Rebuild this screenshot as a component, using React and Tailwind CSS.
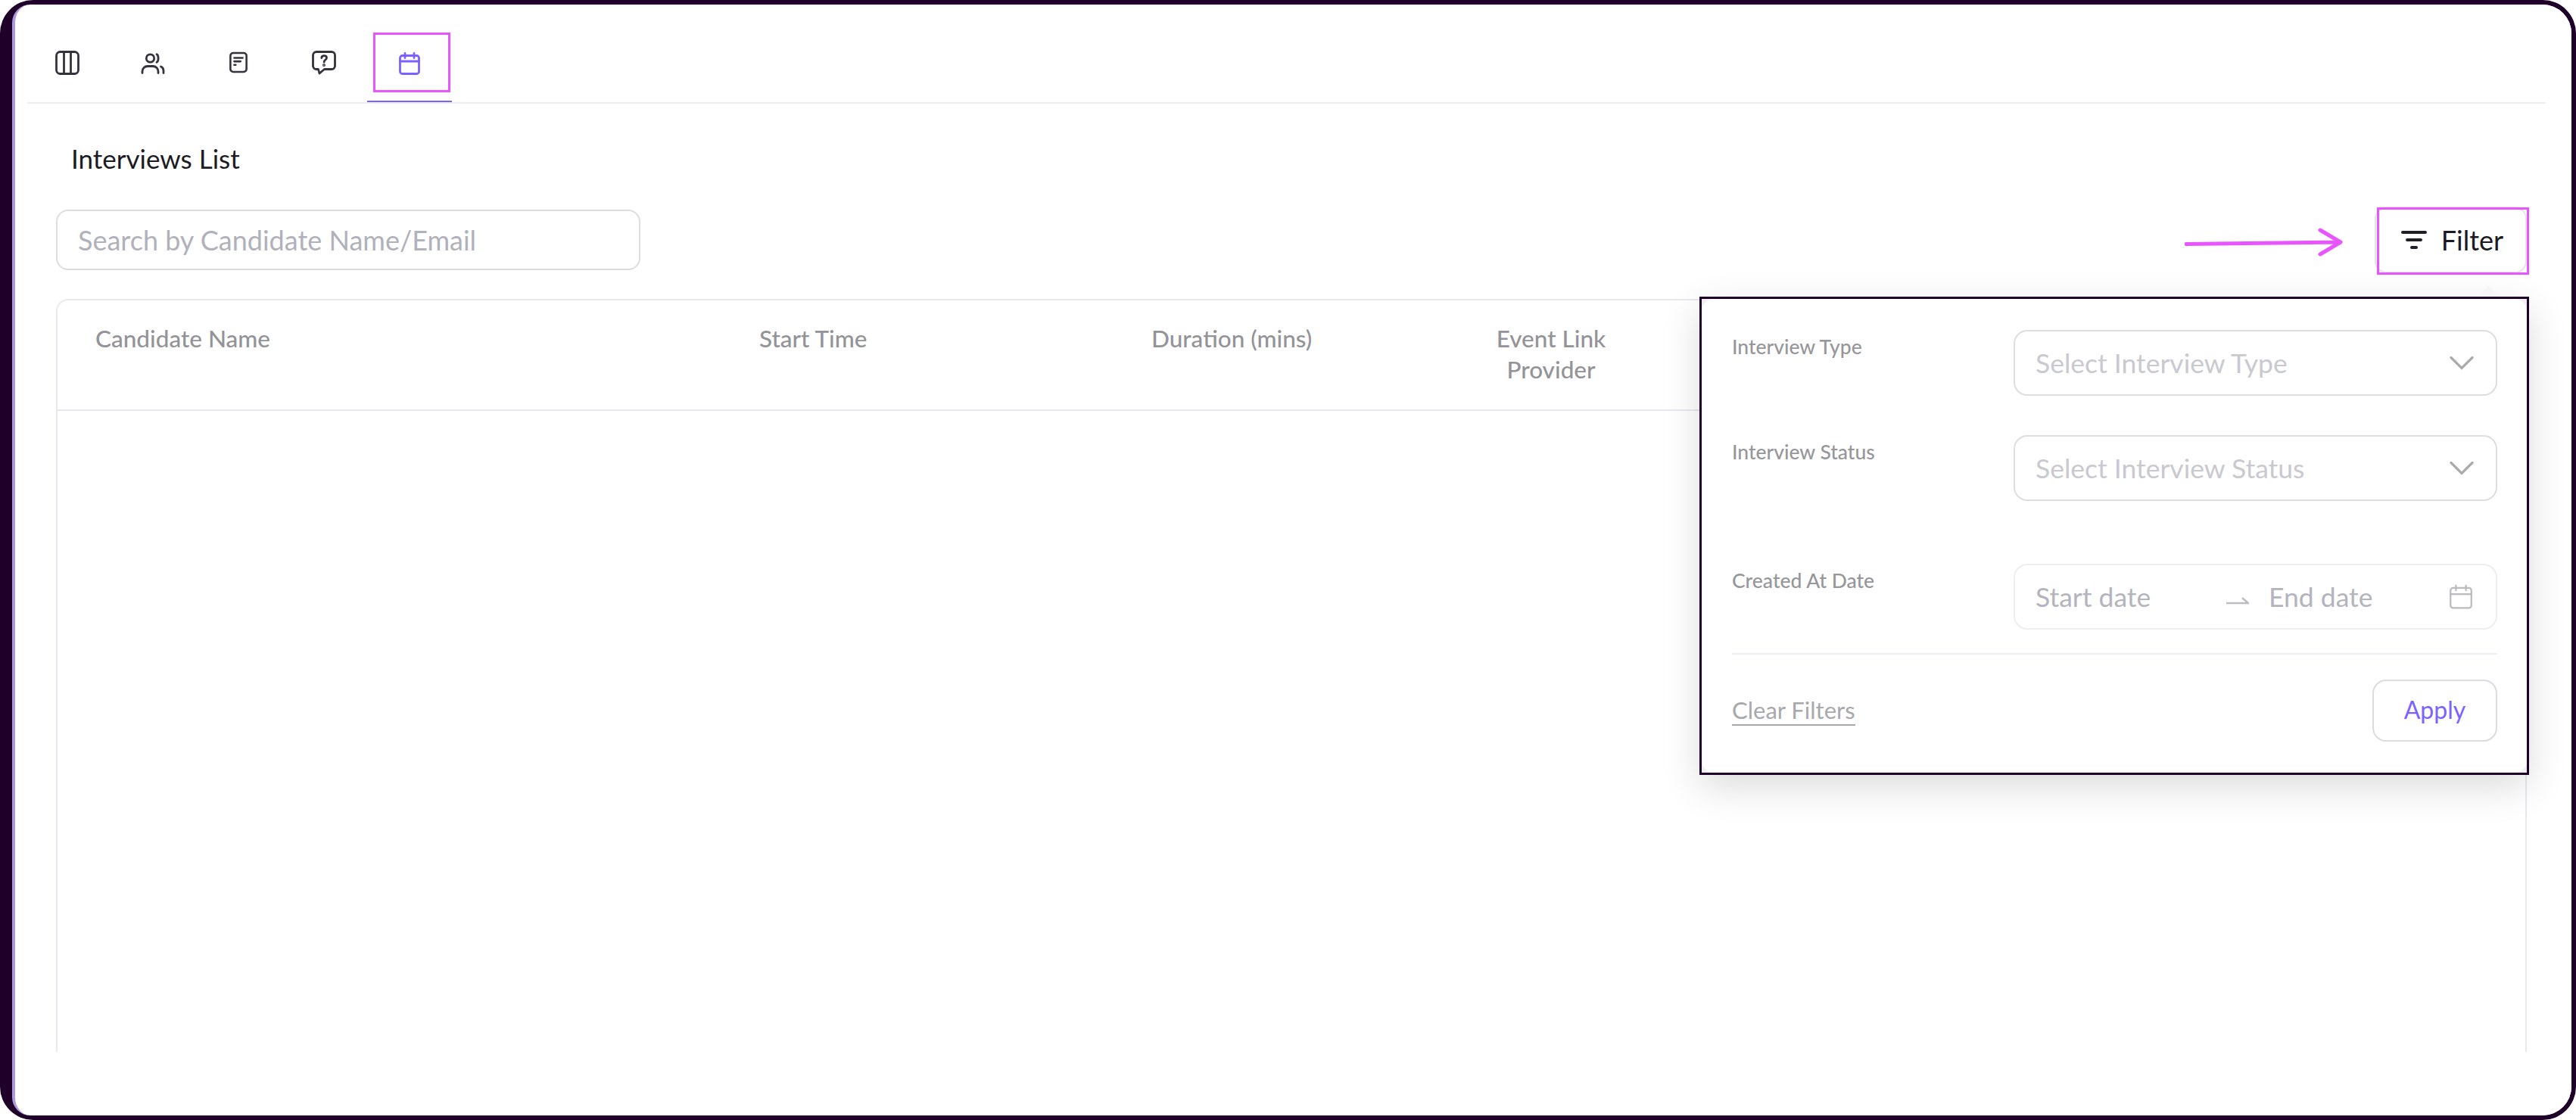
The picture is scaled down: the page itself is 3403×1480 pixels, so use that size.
import React from "react";

const font = { fontFamily: '"Lato", "Liberation Sans", sans-serif' };

function Tab({ active, children }) {
  return (
    <div className={`relative flex h-[129px] w-[113px] items-start justify-center pt-[61px] ${active ? "text-[#7b61ff]" : "text-[#33333d]"}`}>
      {children}
      {active && <div className="absolute bottom-0 left-[1px] right-0 h-[2px] bg-[#7b61ff]" />}
      {active && <div className="absolute left-[9px] right-[2px] top-[37px] h-[79px] border-[3px] border-[#e855ff]" />}
    </div>
  );
}

function ColumnsIcon() {
  return (
    <svg width="32" height="32" viewBox="0 0 32 32" fill="none" stroke="currentColor" strokeWidth="2.8">
      <rect x="1.5" y="1.5" width="29" height="29" rx="5" />
      <path d="M11.5 1.5v29M20.5 1.5v29" />
    </svg>
  );
}
function UsersIcon() {
  return (
    <svg className="mt-[2px]" width="32" height="30" viewBox="0 0 32 30" fill="none" stroke="currentColor" strokeWidth="2.8" strokeLinecap="round">
      <circle cx="12.5" cy="8" r="5.2" />
      <path d="M21 2.800c2.800 1.200 2.800 9 0 10.400" />
      <path d="M2 27.500v-2c0-4 3-7 7-7h7c4 0 7 3 7 7v2" />
      <path d="M26.500 19c2.200.8 3.500 3.400 3.500 5.500v3" />
    </svg>
  );
}
function DocIcon() {
  return (
    <svg className="mt-[1px]" width="24" height="29" viewBox="0 0 26 30" fill="none" stroke="currentColor" strokeWidth="2.8" strokeLinecap="round">
      <rect x="1.5" y="1.5" width="23" height="27" rx="4" />
      <path d="M7 8.500h12M7 13.500h9M7 18.500h2" />
    </svg>
  );
}
function HelpIcon() {
  return (
    <svg width="32" height="32" viewBox="0 0 32 32" fill="none" stroke="currentColor" strokeWidth="2.8" strokeLinejoin="round" strokeLinecap="round">
      <path d="M6 1.500h20a4.500 4.500 0 0 1 4.500 4.500v14a4.500 4.500 0 0 1-4.500 4.500h-9.500L10 30l-1.500-5.500H6A4.500 4.500 0 0 1 1.500 20V6A4.500 4.500 0 0 1 6 1.500z" />
      <path d="M12.800 9.500c.3-3.800 6.500-3.800 6.700-.2.100 2.700-3.400 2.800-3.400 5.700" />
      <circle cx="16" cy="19" r="0.6" fill="currentColor" />
    </svg>
  );
}
function CalendarIcon({ w = 28, h = 30, sw = 2.8 }) {
  return (
    <svg width={w} height={h} viewBox="0 0 28 30" fill="none" stroke="currentColor" strokeWidth={sw} strokeLinecap="round">
      <rect x="1.500" y="4.500" width="25" height="24" rx="3" />
      <path d="M1.500 12h25M8 1.500v6M20 1.500v6" />
    </svg>
  );
}

function Label({ children }) {
  return <div className="w-[372px] shrink-0 pt-[4px] text-[26.5px] font-medium leading-[36px] text-[#96969b]">{children}</div>;
}

function Select({ placeholder }) {
  return (
    <div className="flex h-[87px] w-[639px] shrink-0 items-center justify-between rounded-[18px] border-2 border-[#dedee2] pl-[27px] pr-[29px]">
      <span className="text-[35.5px] leading-none text-[#c9c9cf]">{placeholder}</span>
      <svg width="32" height="20" viewBox="0 0 32 20" fill="none" stroke="#ababab" strokeWidth="3.200" strokeLinecap="round">
        <path d="M2 2.500l14 14 14-14" />
      </svg>
    </div>
  );
}

export default function App() {
  return (
    <div className="h-[1480px] w-[3403px] overflow-hidden bg-white" style={font}>
      <div className="h-full w-full rounded-[44px] border-y-[6px] border-l-[16px] border-r-[6px] border-[#1e0028]">
        <div className="relative h-full overflow-hidden rounded-l-[24px] rounded-r-[38px] border-l-4 border-[#ac9bdc] bg-white">
          <div className="ml-4 mr-[34px] flex h-[131px] border-b-2 border-[#eeeeee]">
            <div className="-ml-1 flex">
              <Tab><ColumnsIcon /></Tab>
              <Tab><UsersIcon /></Tab>
              <Tab><DocIcon /></Tab>
              <Tab><HelpIcon /></Tab>
              <Tab active><span className="mt-[2px] block"><CalendarIcon /></span></Tab>
            </div>
          </div>

          <h1 className="ml-[74px] mt-[52px] text-[35px] font-normal leading-[40px] text-[#1b1b23]">Interviews List</h1>

          <div className="ml-[54px] mr-[59px] mt-[44px] flex items-center justify-between">
            <div className="flex h-[80px] w-[772px] items-center rounded-[16px] border-2 border-[#dddde0] pl-[27px]">
              <span className="text-[36px] leading-none text-[#b1b1bb]">Search by Candidate Name/Email</span>
            </div>
            <div className="relative flex h-[88px] w-[201px] items-center justify-center gap-[19px] rounded-[16px] border-2 border-[#e4e4e4] pl-[4px]">
              <svg width="34" height="26" viewBox="0 0 34 26" fill="none" stroke="#1f1f28" strokeWidth="4" strokeLinecap="round">
                <path d="M2 3h30M8 13h18M14 23h6" />
              </svg>
              <span className="text-[36px] leading-none text-[#1b1b23]">Filter</span>
              <div className="absolute -bottom-[4px] left-[1px] -right-[5px] -top-[1px] border-[3px] border-[#e855ff]" />
              <svg className="absolute -left-[253px] top-[26px]" width="212" height="38" viewBox="0 0 212 38" fill="none" stroke="#e855ff" strokeWidth="5" strokeLinecap="round" strokeLinejoin="round">
                <path d="M2 21.500L206 19M179 3l27 16-27 16" />
              </svg>
            </div>
          </div>

          <div className="ml-[54px] mr-[59px] mt-[34px] h-[995px] rounded-t-[16px] border-x-2 border-t-2 border-[#e8e8f0]">
            <div className="flex h-[146px] items-start border-b-2 border-[#e8e8f0] pt-[30px] text-[31.5px] font-medium leading-[41px] text-[#939398]">
              <div className="w-[927px] pl-[50px]">Candidate Name</div>
              <div className="w-[518px]">Start Time</div>
              <div className="w-[378px]">Duration (mins)</div>
              <div className="w-[300px] text-center">Event Link<br />Provider</div>
            </div>
          </div>

          <div className="absolute left-[2225px] top-[386px] w-[1096px] shadow-[0_16px_48px_rgba(0,0,0,0.14)]">
            <div className="absolute -top-[10px] right-[44px] h-[20px] w-[20px] rotate-45 bg-[#f6f6f6]" />
            <div className="relative h-[632px] border-[3px] border-[#1e0028] bg-[#f0f0f0]">
              <div className="flex h-full flex-col rounded-[16px] bg-white pl-[40px] pr-[40px] pt-[41px]">
                <div className="flex">
                  <Label>Interview Type</Label>
                  <Select placeholder="Select Interview Type" />
                </div>
                <div className="mt-[52px] flex">
                  <Label>Interview Status</Label>
                  <Select placeholder="Select Interview Status" />
                </div>
                <div className="mt-[83px] flex">
                  <Label>Created At Date</Label>
                  <div className="flex h-[87px] w-[639px] shrink-0 items-center rounded-[18px] border-2 border-[#eeeef0] pl-[27px] pr-[30px] text-[#b4b4bd]">
                    <span className="w-[252px] text-[35.5px] leading-none">Start date</span>
                    <svg className="mt-[8px]" width="30" height="12" viewBox="0 0 30 12" fill="none" stroke="#bcbcc2" strokeWidth="2.400">
                      <path d="M0 10h29L21 3" />
                    </svg>
                    <span className="ml-[26px] text-[35.5px] leading-none">End date</span>
                    <span className="ml-auto text-[#bbbbbf]"><CalendarIcon w={32} h={33} sw={2} /></span>
                  </div>
                </div>
                <div className="mt-[31px] h-[2px] w-[1011px] bg-[#eeeef4]" />
                <div className="mt-[33px] flex w-[1011px] items-center justify-between">
                  <span className="border-b-2 border-[#a8a8a8] pb-[1px] text-[31px] leading-[36px] text-[#a8a8ad]">Clear Filters</span>
                  <div className="flex h-[82px] w-[165px] items-center justify-center rounded-[18px] border-2 border-[#dcdce0] pb-[3px] text-[32px] font-normal leading-none text-[#7b61ff]">Apply</div>
                </div>
              </div>
            </div>
          </div>
        </div>
      </div>
    </div>
  );
}
